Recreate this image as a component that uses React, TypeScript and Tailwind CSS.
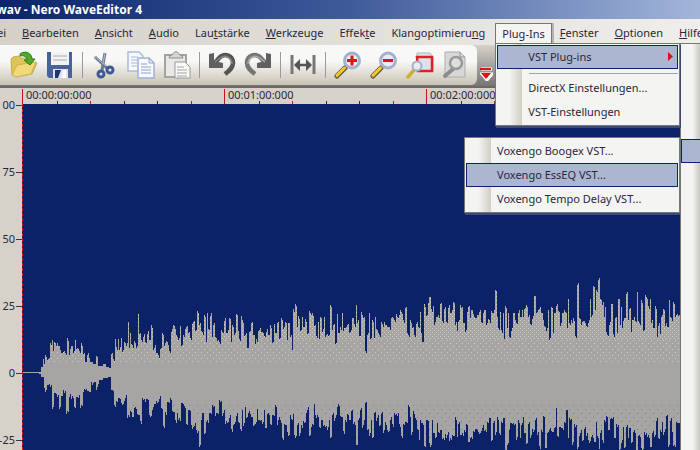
import type { ReactNode } from "react";

// [x, height] pairs of the waveform peaks, above and below the zero line
const PEAKS_UP = [
  39, 1, 42, 6, 43, 14, 44, 9, 45, 18, 47, 13, 49, 15, 51, 28, 52, 33, 53, 22, 55, 30, 57, 30, 59, 27, 61, 20, 63, 21, 65, 20, 68, 32, 69, 18,
  71, 27, 74, 22, 75, 33, 77, 25, 79, 22, 82, 27, 84, 20, 86, 11, 88, 20, 89, 15, 91, 11, 95, 9, 97, 16, 99, 7, 101, 7, 104, 9, 107, 6, 110, 5,
  112, 20, 114, 12, 115, 34, 117, 23, 118, 34, 120, 26, 121, 35, 123, 23, 125, 30, 127, 30, 128, 51, 129, 25, 130, 40, 132, 28, 135, 30,
  137, 27, 138, 59, 140, 40, 142, 31, 143, 36, 146, 30, 148, 42, 150, 33, 152, 45, 153, 23, 155, 28, 157, 20, 159, 15, 161, 25, 163, 38,
  164, 27, 167, 31, 170, 20, 171, 41, 174, 47, 177, 36, 179, 35, 180, 47, 182, 28, 184, 36, 186, 46, 189, 41, 191, 33, 193, 51, 196, 43,
  198, 60, 200, 50, 202, 41, 205, 56, 206, 31, 207, 60, 209, 43, 211, 60, 212, 36, 214, 50, 216, 35, 219, 31, 223, 40, 225, 55, 227, 40,
  230, 54, 231, 31, 233, 46, 235, 40, 237, 58, 238, 42, 240, 32, 241, 57, 243, 50, 245, 38, 248, 25, 249, 41, 252, 51, 253, 38, 257, 31,
  259, 43, 262, 41, 264, 37, 267, 44, 269, 38, 271, 45, 273, 31, 274, 49, 276, 40, 277, 50, 280, 35, 282, 53, 284, 46, 286, 50, 287, 33,
  288, 50, 291, 38, 292, 23, 293, 64, 296, 67, 297, 46, 299, 54, 301, 43, 302, 56, 304, 46, 306, 51, 308, 40, 310, 60, 313, 57, 315, 48,
  317, 35, 318, 51, 319, 34, 321, 55, 323, 44, 324, 56, 326, 38, 329, 38, 331, 66, 332, 43, 333, 48, 336, 30, 337, 59, 339, 40, 341, 43,
  342, 60, 344, 45, 347, 48, 350, 41, 353, 55, 355, 46, 356, 68, 358, 53, 360, 37, 362, 58, 364, 56, 366, 20, 368, 40, 369, 60, 371, 35,
  373, 51, 374, 35, 375, 56, 377, 43, 380, 36, 381, 51, 383, 46, 384, 51, 388, 46, 390, 43, 392, 56, 394, 53, 397, 56, 401, 61, 404, 50,
  406, 66, 408, 38, 409, 36, 411, 50, 413, 46, 415, 36, 417, 51, 419, 45, 420, 61, 421, 40, 423, 31, 425, 66, 427, 58, 428, 70, 430, 76,
  432, 61, 433, 67, 435, 51, 437, 56, 439, 55, 441, 70, 443, 50, 445, 66, 447, 50, 449, 68, 451, 60, 454, 70, 456, 51, 457, 42, 459, 53,
  460, 68, 462, 66, 463, 50, 466, 43, 467, 61, 469, 67, 470, 55, 472, 63, 474, 56, 477, 58, 480, 63, 482, 50, 484, 63, 487, 50, 489, 53,
  493, 60, 496, 82, 497, 56, 499, 43, 500, 61, 502, 40, 503, 60, 504, 34, 506, 65, 507, 45, 508, 60, 510, 35, 512, 45, 514, 60, 516, 50,
  519, 63, 521, 56, 522, 63, 523, 56, 525, 65, 527, 66, 529, 58, 531, 48, 533, 57, 535, 77, 536, 60, 539, 64, 542, 60, 543, 53, 545, 46,
  547, 45, 548, 63, 550, 35, 552, 65, 553, 40, 554, 60, 557, 69, 559, 61, 561, 50, 563, 60, 566, 60, 567, 45, 568, 74, 569, 50, 572, 50,
  573, 55, 576, 35, 578, 90, 579, 55, 582, 51, 584, 52, 586, 47, 589, 53, 590, 74, 592, 58, 594, 86, 595, 63, 597, 81, 599, 95, 600, 74,
  603, 71, 604, 56, 605, 66, 607, 38, 610, 51, 612, 69, 614, 36, 616, 56, 617, 40, 619, 74, 620, 48, 621, 66, 622, 45, 624, 55, 627, 81,
  628, 53, 630, 65, 631, 41, 633, 53, 636, 51, 637, 81, 639, 50, 642, 70, 644, 43, 646, 76, 649, 64, 650, 74, 652, 53, 654, 45, 656, 64,
  657, 36, 659, 50, 660, 39, 662, 58, 664, 63, 666, 50, 668, 46, 669, 73, 671, 55, 674, 69, 676, 58, 679, 58,
];

const PEAKS_DOWN = [
  39, 1, 42, 4, 46, 17, 47, 12, 50, 14, 53, 34, 54, 20, 57, 24, 60, 34, 61, 23, 64, 20, 68, 39, 69, 24, 73, 25, 75, 35, 77, 24, 82, 33, 83, 19,
  86, 16, 89, 19, 92, 12, 95, 9, 97, 14, 100, 7, 105, 5, 110, 4, 112, 17, 115, 34, 117, 29, 119, 25, 122, 32, 125, 25, 129, 44, 131, 39,
  133, 44, 135, 34, 138, 42, 141, 51, 143, 27, 147, 26, 150, 44, 153, 34, 157, 30, 160, 23, 161, 35, 164, 55, 165, 39, 168, 29, 171, 27,
  173, 39, 176, 50, 177, 40, 179, 45, 182, 30, 185, 35, 187, 52, 189, 37, 193, 54, 195, 50, 197, 60, 200, 72, 201, 47, 203, 40, 205, 60,
  207, 47, 210, 40, 213, 34, 217, 40, 220, 29, 223, 40, 227, 50, 230, 42, 232, 59, 233, 52, 235, 49, 237, 40, 238, 49, 241, 58, 242, 37,
  244, 50, 245, 34, 247, 44, 249, 38, 252, 44, 254, 52, 256, 49, 257, 36, 259, 47, 263, 49, 264, 37, 266, 55, 268, 40, 271, 52, 273, 42,
  276, 34, 277, 52, 279, 44, 281, 50, 283, 67, 285, 52, 289, 62, 290, 42, 292, 47, 293, 41, 295, 65, 298, 50, 300, 60, 302, 55, 304, 50,
  307, 37, 310, 62, 311, 54, 313, 52, 314, 31, 316, 45, 317, 42, 320, 55, 322, 47, 324, 52, 328, 54, 329, 47, 331, 64, 333, 40, 335, 45,
  339, 33, 341, 44, 344, 61, 346, 49, 348, 42, 350, 47, 352, 37, 354, 49, 357, 72, 358, 47, 361, 35, 363, 52, 364, 47, 366, 29, 367, 57,
  370, 60, 371, 47, 373, 64, 374, 40, 377, 45, 380, 52, 382, 39, 384, 57, 386, 52, 388, 59, 391, 44, 393, 54, 395, 42, 398, 40, 400, 54,
  402, 65, 404, 52, 406, 49, 409, 34, 410, 44, 412, 59, 414, 41, 416, 47, 418, 57, 419, 67, 421, 50, 423, 52, 425, 74, 427, 47, 431, 72,
  432, 47, 434, 60, 436, 64, 437, 50, 439, 60, 441, 57, 443, 65, 447, 62, 451, 67, 453, 63, 456, 47, 457, 64, 459, 49, 460, 62, 463, 63,
  465, 59, 467, 52, 469, 69, 471, 64, 474, 59, 476, 56, 479, 61, 482, 55, 485, 57, 488, 50, 490, 45, 492, 67, 494, 48, 496, 59, 498, 47,
  500, 62, 502, 50, 504, 45, 506, 77, 508, 70, 509, 57, 511, 50, 514, 52, 517, 64, 519, 50, 520, 65, 522, 50, 523, 44, 525, 60, 527, 70,
  529, 49, 531, 62, 533, 59, 536, 45, 538, 59, 540, 76, 542, 59, 544, 44, 546, 75, 548, 59, 550, 55, 553, 59, 555, 54, 556, 35, 558, 64,
  560, 54, 563, 57, 565, 50, 567, 37, 568, 65, 570, 47, 573, 69, 575, 54, 578, 74, 580, 60, 583, 67, 585, 54, 587, 60, 589, 70, 592, 62,
  595, 69, 596, 49, 598, 65, 599, 76, 601, 57, 603, 70, 605, 49, 607, 44, 609, 57, 611, 45, 613, 44, 614, 65, 617, 54, 620, 76, 622, 67,
  623, 54, 625, 74, 627, 52, 628, 65, 630, 55, 632, 69, 634, 57, 637, 77, 639, 62, 643, 76, 645, 62, 648, 62, 651, 74, 652, 60, 655, 62,
  657, 45, 658, 65, 661, 59, 662, 49, 664, 59, 667, 42, 669, 72, 671, 45, 672, 59, 674, 72, 677, 50, 679, 50,
];

const LEFT = 39;
const RIGHT = 680;
const ZERO = 373;

// one height per column, taken from the nearest peak with a little ripple
function columns(peaks: number[], seed: number) {
  const out: number[] = [];
  let i = 0;
  for (let x = LEFT; x < RIGHT; x++) {
    while (i + 2 < peaks.length && Math.abs(peaks[i + 2] - x) <= Math.abs(peaks[i] - x)) i += 2;
    const exact = peaks[i] === x;
    const ripple = exact || peaks[i + 1] < 12 ? 0 : ((x * seed) % 7) - 3;
    out.push(peaks[i + 1] + ripple);
  }
  return out;
}

function wavePath() {
  let d = `M${LEFT} ${ZERO}`;
  columns(PEAKS_UP, 5).forEach((h, i) => {
    d += `V${ZERO - h}H${LEFT + i + 1}`;
  });
  columns(PEAKS_DOWN, 11)
    .reverse()
    .forEach((h, i) => {
      d += `V${ZERO + h}H${RIGHT - i - 1}`;
    });
  return d + "Z";
}

function Waveform() {
  return (
    <svg
      className="absolute inset-0 h-full w-full"
      viewBox="23 104 677 346"
      preserveAspectRatio="none"
      shapeRendering="crispEdges"
      aria-label="Wellenform"
    >
      <defs>
        <clipPath id="wave">
          <path d={wavePath()} />
        </clipPath>
        <pattern id="dense" width="4" height="4" patternUnits="userSpaceOnUse">
          <path d="M0 0h1v1h-1zM2 2h1v1h-1z" fill="#d2ccb9" />
        </pattern>
        <pattern id="light" width="6" height="6" patternUnits="userSpaceOnUse">
          <path d="M0 1h1v1h-1zM3 4h1v1h-1z" fill="#d2ccb9" />
        </pattern>
        <pattern id="dark" width="8" height="8" patternUnits="userSpaceOnUse">
          <path d="M1 1h1v1h-1zM5 5h1v1h-1z" fill="#828282" />
        </pattern>
      </defs>
      <path d="M23 372h17v1h-17z" fill="#a6a5a3" />
      <g clipPath="url(#wave)">
        <rect x="23" y="104" width="677" height="346" fill="#a6a5a3" />
        <rect x="23" y="104" width="677" height="236" fill="url(#dense)" />
        <rect x="23" y="340" width="677" height="22" fill="url(#light)" />
        <rect x="23" y="402" width="677" height="48" fill="url(#dark)" />
      </g>
    </svg>
  );
}

function Icon({ children }: { children: ReactNode }) {
  return (
    <svg width="28" height="28" viewBox="0 0 28 28" fill="none" aria-hidden="true">
      {children}
    </svg>
  );
}

function Lens({ sign }: { sign: string }) {
  return (
    <Icon>
      <path d="M11 17 3 25" stroke="#6a5a38" strokeWidth="5" strokeLinecap="round" />
      <path d="M10.500 17 3 24.500" stroke="#f0cc28" strokeWidth="3" strokeLinecap="round" />
      <circle cx="18" cy="9.500" r="7.500" fill="#e8ecf6" stroke="#a3b1ce" strokeWidth="3" />
      <path d={sign} stroke="#e01414" strokeWidth="3" />
    </Icon>
  );
}

const icons = {
  open: (
    <Icon>
      <path d="M1 8 3 6l6-1 2 2 9 1 1 5 6-1-5 11-16 3-4-2z" fill="#dcc35c" stroke="#c7ab46" />
      <path d="M2 24 7 14l19-3-5 12-15 3z" fill="#efd978" stroke="#cfb34c" />
      <path d="M10 3c5-4 12-1 12 5h3l-5 6-6-5h3c0-3-3-5-7-4z" fill="#52ab28" stroke="#2f7a1c" />
    </Icon>
  ),
  save: (
    <Icon>
      <path d="M1 1h25v26H3l-2-2z" fill="#48629b" />
      <path d="M5 1h18v13H5z" fill="#f3f3f3" />
      <path d="M7 5h14M7 9h14" stroke="#cfcfcf" strokeWidth="2" />
      <path d="M7 18h15v9H7z" fill="#dfe2e6" />
      <path d="M9 19h6l-3 8H9z" fill="#1f3674" />
      <path d="M17 19h3v8h-4z" fill="#fff" />
    </Icon>
  ),
  cut: (
    <Icon>
      <path d="M4 6 17 18M14 2l-3 17" stroke="#69788e" strokeWidth="3" />
      <path d="m3 5 12 10M14 2l-2 11" stroke="#b3bdc9" />
      <circle cx="10" cy="23" r="3" stroke="#3f5896" strokeWidth="3" />
      <circle cx="19" cy="19" r="3" stroke="#3f5896" strokeWidth="3" />
    </Icon>
  ),
  copy: (
    <Icon>
      <path d="M1 1h11l4 4v15H1z" fill="#f7f9fd" stroke="#a9b9dc" strokeWidth="1.500" />
      <path d="M4 6h7M4 9h9M4 12h7M4 15h6" stroke="#a9b9dc" />
      <path d="M11 7h11l5 5v15H11z" fill="#f7f9fd" stroke="#9fb1d8" strokeWidth="1.500" />
      <path d="M22 7v5h5M14 13h6M14 16h10M14 19h10M14 22h10" stroke="#8ea4d0" />
    </Icon>
  ),
  paste: (
    <Icon>
      <path d="M2 4h21v22H2z" fill="#e9e8e5" stroke="#a3a3a3" strokeWidth="2" />
      <path d="M6 7c0-3 3-2 4-4 1-3 5-3 6 0 1 2 4 1 4 4z" fill="#d6d6d6" stroke="#8f8f8f" />
      <path d="M12 11h10l5 5v11H12z" fill="#fafafa" stroke="#9a9a9a" />
      <path d="M14 16h7M14 19h10M14 22h10M14 25h10" stroke="#a2a2a2" />
    </Icon>
  ),
  undo: (
    <Icon>
      <path d="M6 13 11 7C17 1 25 5 25 12c0 5-4 8-8 11" stroke="#555" strokeWidth="4.500" />
      <path d="M1 3l5-1v8l9 2v5H1z" fill="#606060" />
      <path d="m7 11 5-4c6-4 12 0 12 6" stroke="#858585" strokeWidth="1.500" />
    </Icon>
  ),
  redo: (
    <Icon>
      <path d="M22 13 17 7C11 1 3 5 3 12c0 5 4 8 8 11" stroke="#757575" strokeWidth="4.500" />
      <path d="M27 3l-5-1v8l-9 2v5h14z" fill="#606060" />
      <path d="m21 11-5-4C10 3 4 7 4 13" stroke="#a8a8a8" strokeWidth="1.500" />
    </Icon>
  ),
  fit: (
    <Icon>
      <path d="M3 4v19M25 4v19" stroke="#777" strokeWidth="3" />
      <path d="M6 14h16" stroke="#555" strokeWidth="2.500" />
      <path d="m5 14 6-6v12zM23 14l-6-6v12z" fill="#555" />
    </Icon>
  ),
  zoomIn: <Lens sign="M13 9.500h10M18 4.500v10" />,
  zoomOut: <Lens sign="M13 9.500h10" />,
  zoomSelection: (
    <Icon>
      <path d="M11 2h13l3 4v14H11z" fill="#dde2ea" stroke="#a9b3c5" />
      <path d="M11 6h15v14H12z" stroke="#df2020" strokeWidth="2.500" />
      <path d="m8 19-6 7" stroke="#cfae3a" strokeWidth="3.500" strokeLinecap="round" />
      <circle cx="11" cy="15" r="4.500" fill="#e8ecf4" stroke="#a3b1ce" strokeWidth="2" />
    </Icon>
  ),
  zoomFile: (
    <Icon>
      <path d="M3 1h15l5 5v20H3z" fill="#d8d8d8" stroke="#acacac" />
      <path d="M18 1v5h5" stroke="#999" />
      <path d="m11 18-8 7" stroke="#8d8d8d" strokeWidth="4" strokeLinecap="round" />
      <circle cx="14" cy="12" r="6" fill="#dedede" stroke="#999" strokeWidth="2.500" />
    </Icon>
  ),
};

function ToolButton({ label, children }: { label: string; children: ReactNode }) {
  return (
    <button type="button" aria-label={label} className="flex h-10 w-9 shrink-0 items-center justify-center">
      {children}
    </button>
  );
}

function ToolSeparator() {
  return <div className="mx-1 h-[26px] w-px bg-[#9a9a9a]" />;
}

function MenuTitle({ children }: { children: ReactNode }) {
  return (
    <button type="button" className="h-5 shrink-0 px-2">
      {children}
    </button>
  );
}

function MenuItem({ active, arrow, children }: { active?: boolean; arrow?: boolean; children: ReactNode }) {
  return (
    <button
      type="button"
      role="menuitem"
      className={
        active
          ? "flex h-6 w-full items-center justify-between border border-[#0a246a] bg-[#abb6d0] pr-1 pb-px pl-[30px]"
          : "flex h-6 w-full items-center border border-transparent pb-px pl-[30px]"
      }
    >
      {children}
      {arrow && (
        <svg width="5" height="9" viewBox="0 0 5 9" aria-hidden="true">
          <path d="M0 0 5 4.500 0 9z" fill="#d01818" />
        </svg>
      )}
    </button>
  );
}

export default function App() {
  return (
    <div className="relative flex min-h-screen flex-col overflow-hidden bg-[#d6d2ca] font-['Noto_Sans','DejaVu_Sans',sans-serif] text-[11px] leading-[14px] whitespace-nowrap text-[#2b2638]">
      <header className="flex h-[19px] items-center bg-linear-to-r from-[#0b246b] via-[#405b9a] to-[#a3b6da] text-[12px] font-bold text-white">
        <h1 className="flex w-[142px] justify-end">wav - Nero WaveEditor 4</h1>
      </header>

      <nav className="flex h-[26px] items-end bg-linear-to-r from-[#d5d1c9] to-[#efeeeb] pb-[2px]">
        <div className="flex w-[14px] shrink-0 justify-end">
          <MenuTitle>ei</MenuTitle>
        </div>
        <MenuTitle><u>B</u>earbeiten</MenuTitle>
        <MenuTitle><u>A</u>nsicht</MenuTitle>
        <MenuTitle><u>A</u>udio</MenuTitle>
        <MenuTitle>Lau<u>t</u>stärke</MenuTitle>
        <MenuTitle><u>W</u>erkzeuge</MenuTitle>
        <MenuTitle>Effek<u>t</u>e</MenuTitle>
        <MenuTitle>Klangoptimieru<u>n</u>g</MenuTitle>
        <div className="relative ml-[2px] shrink-0">
          <button type="button" className="relative z-20 h-5 border border-b-0 border-[#77767a] bg-[#f4f4f2] px-[6px] shadow-[2px_0_0_#b5b3ae]">
            Plug-Ins
          </button>
          <div role="menu" className="absolute top-5 left-0 z-10 w-[185px] border border-[#77767a] bg-[#f4f4f2] bg-linear-to-r from-[#f4f4f2] from-50% to-[#d2cec5] bg-[length:26px_100%] bg-no-repeat p-px shadow-[1px_2px_0_#3b4a78]">
            <MenuItem active arrow>VST Plug-ins</MenuItem>
            <hr className="mt-1 mb-[2px] ml-8 border-t border-[#a3a4ab]" />
            <MenuItem>DirectX Einstellungen...</MenuItem>
            <MenuItem>VST-Einstellungen</MenuItem>
          </div>
        </div>
        <MenuTitle><u>F</u>enster</MenuTitle>
        <MenuTitle><u>O</u>ptionen</MenuTitle>
        <MenuTitle><u>H</u>ilfe</MenuTitle>
      </nav>

      <div className="flex h-[41px] bg-linear-to-b from-[#d6d2ca] to-[#767676]">
        <div className="flex h-10 shrink-0 items-center rounded-r-md bg-linear-to-b from-[#f8f8f6] from-40% to-[#c9c4b4] pr-[3px] pl-[6px]">
          <ToolButton label="Öffnen">{icons.open}</ToolButton>
          <ToolButton label="Speichern">{icons.save}</ToolButton>
          <ToolSeparator />
          <ToolButton label="Ausschneiden">{icons.cut}</ToolButton>
          <ToolButton label="Kopieren">{icons.copy}</ToolButton>
          <ToolButton label="Einfügen">{icons.paste}</ToolButton>
          <ToolSeparator />
          <ToolButton label="Rückgängig">{icons.undo}</ToolButton>
          <ToolButton label="Wiederherstellen">{icons.redo}</ToolButton>
          <ToolSeparator />
          <ToolButton label="Einpassen">{icons.fit}</ToolButton>
          <ToolSeparator />
          <ToolButton label="Vergrößern">{icons.zoomIn}</ToolButton>
          <ToolButton label="Verkleinern">{icons.zoomOut}</ToolButton>
          <ToolButton label="Auswahl zoomen">{icons.zoomSelection}</ToolButton>
          <ToolButton label="Alles anzeigen">{icons.zoomFile}</ToolButton>
        </div>
        <button type="button" aria-label="Weitere Symbole" className="flex w-[18px] items-end justify-center pb-[5px]">
          <svg width="13" height="14" viewBox="0 0 13 14" aria-hidden="true">
            <path d="M1 2h11M2 7h10l-5 6z" stroke="#fff" strokeWidth="3" />
            <path d="M0 1h11v2H0zM1 6h10l-5 6z" fill="#e01414" />
          </svg>
        </button>
      </div>
      <div className="h-[2px] bg-[#6a6a6a]" />

      <main className="flex flex-1">
        <div className="flex w-[22px] shrink-0 flex-col pt-[10px]">
          {["00", "75", "50", "25", "0", "-25"].map((label) => (
            <div key={label} className="flex h-[67px] items-start justify-end gap-px last:h-[9px]">
              <span>{label}</span>
              <span className="mt-[7px] h-px w-[6px] shrink-0 bg-[#3a3a3a]" />
            </div>
          ))}
        </div>
        <div className="flex min-w-0 flex-1 flex-col">
          <div className="flex h-4 overflow-hidden">
            {["00:00:00:000", "00:01:00:000", "00:02:00:000"].map((time) => (
              <div key={time} className="mt-px flex w-[202px] shrink-0 flex-col border-l border-[#c01820]">
                <span className="h-3 pl-[3px] leading-[12px]">{time}</span>
                <div className="grid h-[3px] grid-cols-6">
                  <i />
                  <i className="border-l border-[#3a2436]" />
                  <i className="border-l border-[#c01820]" />
                  <i className="border-l border-[#3a2436]" />
                  <i className="border-l border-[#3a2436]" />
                  <i className="border-l border-[#c01820]" />
                </div>
              </div>
            ))}
          </div>
          <div className="relative flex-1 border-l border-dashed border-[#e01818] bg-[#0b2268]">
            <Waveform />
          </div>
        </div>
      </main>

      {/* cascading menus over the wave view */}
      <div role="menu" className="absolute top-[137px] right-[20px] w-[216px] border border-[#77767a] bg-[#f4f4f2] bg-linear-to-r from-[#f4f4f2] from-50% to-[#d2cec5] bg-[length:26px_100%] bg-no-repeat p-px shadow-[1px_2px_0_#3b4a78]">
        <MenuItem>Voxengo Boogex VST...</MenuItem>
        <MenuItem active>Voxengo EssEQ VST...</MenuItem>
        <MenuItem>Voxengo Tempo Delay VST...</MenuItem>
      </div>
      <div className="absolute top-[43px] right-0 bottom-0 w-5 border-t border-l border-[#77767a] bg-linear-to-r from-[#f4f4f2] from-60% to-[#cbc8c2] pt-[95px]">
        <div className="h-6 border border-r-0 border-[#0a246a] bg-[#abb6d0]" />
      </div>
    </div>
  );
}
